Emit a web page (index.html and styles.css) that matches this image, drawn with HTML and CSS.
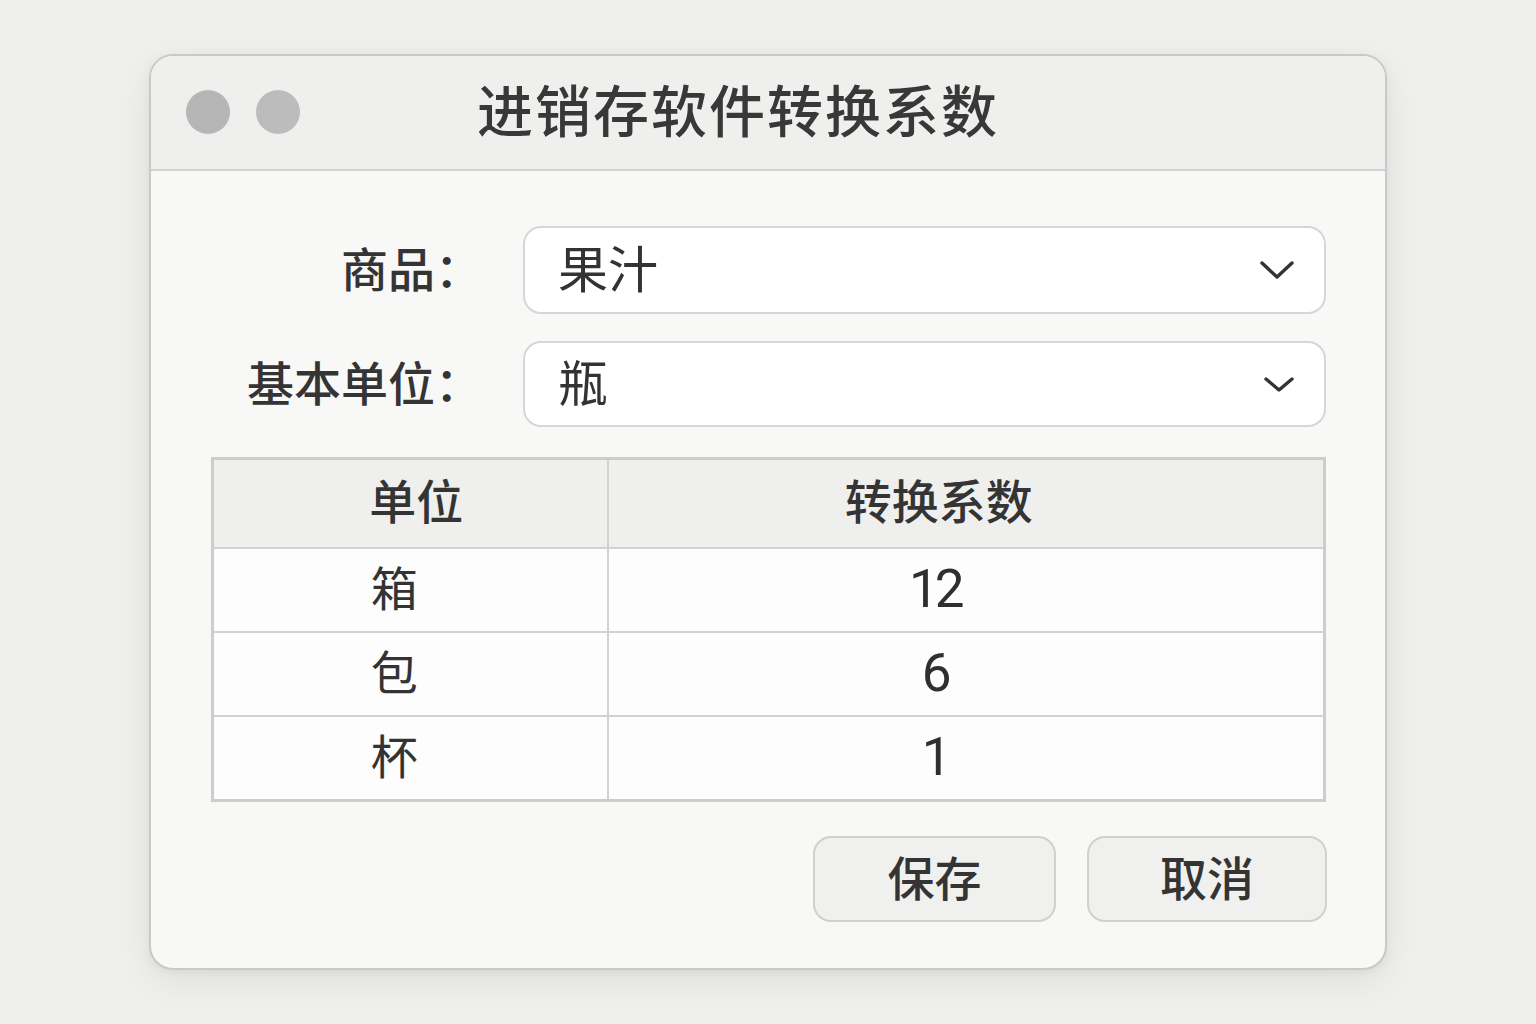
FILE: index.html
```html
<!DOCTYPE html>
<html lang="zh-CN">
<head>
<meta charset="utf-8">
<title>进销存软件转换系数</title>
<link rel="stylesheet" href="styles.css">
</head>
<body>
<div class="window">
  <div class="titlebar">
    <span class="light"></span>
    <span class="light light-second"></span>
    <h1 class="title">进销存软件转换系数</h1>
  </div>
  <div class="content">
    <div class="form">
      <label class="label">商品：</label>
      <div class="select select-first">
        <span class="value">果汁</span>
        <svg class="chevron chevron-lg" viewBox="0 0 34 20"><path d="M2 3 L17 17 L32 3" fill="none" stroke="#333" stroke-width="3.4" stroke-linecap="round" stroke-linejoin="round"/></svg>
      </div>
      <label class="label">基本单位：</label>
      <div class="select select-second">
        <span class="value">瓶</span>
        <svg class="chevron chevron-sm" viewBox="0 0 30 17"><path d="M2 3 L15 14 L28 3" fill="none" stroke="#333" stroke-width="3.4" stroke-linecap="round" stroke-linejoin="round"/></svg>
      </div>
    </div>
    <table class="grid">
      <thead>
        <tr class="head-row"><th class="col-unit">单位</th><th class="col-factor">转换系数</th></tr>
      </thead>
      <tbody>
        <tr class="row"><td class="cell-unit">箱</td><td class="cell-num">12</td></tr>
        <tr class="row"><td class="cell-unit">包</td><td class="cell-num">6</td></tr>
        <tr class="row row-last"><td class="cell-unit">杯</td><td class="cell-num">1</td></tr>
      </tbody>
    </table>
    <div class="actions">
      <button class="btn btn-save">保存</button>
      <button class="btn btn-cancel">取消</button>
    </div>
  </div>
</div>
</body>
</html>
```
FILE: styles.css
```css
* { box-sizing: border-box; }
html, body { margin: 0; padding: 0; }
body {
  background: #efefee;
  font-family: "Noto Sans CJK SC", "Noto Sans", sans-serif;
  color: #333;
  width: 1536px;
  height: 1024px;
  padding: 54px 0 0 149px;
}
.window {
  width: 1238px;
  height: 916px;
  border: 2px solid #c9c9c9;
  border-radius: 24px;
  background: #f8f8f7;
  overflow: hidden;
  box-shadow: 0 12px 36px rgba(0,0,0,0.07), 0 2px 8px rgba(0,0,0,0.05);
  display: flex;
  flex-direction: column;
}
.titlebar {
  height: 115px;
  flex: none;
  background: #efefee;
  border-bottom: 2px solid #d2d2d2;
  display: flex;
  align-items: center;
  padding-left: 35px;
  padding-bottom: 2px;
}
.light {
  width: 44px;
  height: 44px;
  border-radius: 50%;
  background: #b6b6b6;
  flex: none;
}
.light-second { margin-left: 26px; background: #bcbcbc; }
.title {
  margin: 0 0 0 177px;
  font-size: 56px;
  font-weight: 500;
  letter-spacing: 2px;
  color: #383838;
  line-height: 1;
  padding-bottom: 8px;
}
.content {
  padding: 55px 58px 0 60px;
  flex: 1;
  display: flex;
  flex-direction: column;
}
.form {
  display: grid;
  grid-template-columns: 271px 803px;
  column-gap: 41px;
  row-gap: 27px;
  align-items: center;
}
.label {
  text-align: right;
  font-size: 47px;
  font-weight: 500;
  color: #343434;
  line-height: 1;
  padding-bottom: 7px;
}
.select {
  height: 88px;
  background: #fff;
  border: 2px solid #d6d6d6;
  border-radius: 18px;
  display: flex;
  align-items: center;
  justify-content: space-between;
  padding: 0 30px 0 33px;
}
.select-second { height: 86px; padding-right: 30px; }
.value {
  font-size: 50px;
  line-height: 1;
  color: #333;
  padding-bottom: 8px;
}
.chevron { display: block; }
.chevron-lg { width: 34px; height: 20px; }
.chevron-sm { width: 30px; height: 17px; }
.grid {
  margin-top: 30px;
  width: 1115px;
  border-collapse: collapse;
  border: 3px solid #cdcdcd;
  table-layout: fixed;
}
.grid th, .grid td {
  border: 2px solid #d2d2d2;
  padding: 0 0 9px 0;
  text-align: center;
  line-height: 1;
}
.col-unit { width: 395px; }
.head-row { height: 89px; background: #efefee; }
.head-row th {
  font-size: 47px;
  font-weight: 500;
  color: #343434;
}
.grid th.col-unit { padding-left: 12px; }
.grid th.col-factor { padding-right: 54px; }
.row { height: 84px; background: #fdfdfd; }
.row-last { height: 85px; }
.grid td.cell-unit {
  font-size: 47px;
  color: #333;
  padding-right: 32px;
  padding-bottom: 8px;
}
.grid td.cell-num {
  font-family: "Roboto", "Liberation Sans", sans-serif;
  font-size: 53px;
  letter-spacing: -4px;
  color: #2f2f2f;
  padding-right: 62px;
  padding-bottom: 0;
}
.actions {
  margin-top: 34px;
  display: flex;
  justify-content: flex-end;
  gap: 31px;
}
.btn {
  height: 86px;
  border: 2px solid #d0d0d0;
  border-radius: 18px;
  background: #f0f0ef;
  font-family: "Noto Sans CJK SC", sans-serif;
  font-size: 47px;
  font-weight: 500;
  color: #343434;
  padding: 0 0 8px 0;
  line-height: 1;
}
.btn-save { width: 243px; }
.btn-cancel { width: 240px; }
```
